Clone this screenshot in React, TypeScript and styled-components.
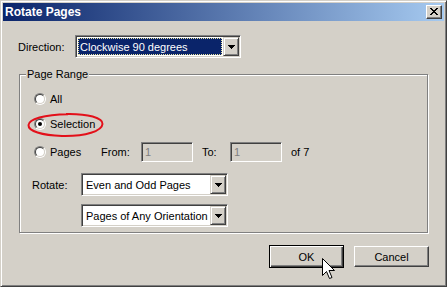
import React from "react";
import styled, { createGlobalStyle } from "styled-components";

const Global = createGlobalStyle`
  html, body { margin: 0; padding: 0; background: #d4d0c8; }
  body { font-family: "Liberation Sans", Tahoma, Arial, sans-serif; font-size: 11px; color: #000; }
  * { box-sizing: border-box; }
`;

const Window = styled.div`
  width: 447px;
  height: 287px;
  background: #d4d0c8;
  border: 1px solid;
  border-color: #d4d0c8 #404040 #404040 #d4d0c8;
  box-shadow: inset 1px 1px 0 #fff, inset -1px -1px 0 #808080;
  padding: 2px;
  display: flex;
  flex-direction: column;
`;

const TitleBar = styled.div`
  height: 18px;
  flex: none;
  display: flex;
  align-items: center;
  justify-content: space-between;
  padding: 0 2px 0 2px;
  background: linear-gradient(to right, #0a246a, #a6caf0);
`;

const Title = styled.span`
  color: #fff;
  font-weight: bold;
  font-size: 12px;
  letter-spacing: 0;
`;

const CloseButton = styled.div`
  width: 16px;
  height: 14px;
  background: #d4d0c8;
  border: 1px solid;
  border-color: #fff #404040 #404040 #fff;
  box-shadow: inset -1px -1px 0 #808080;
  display: flex;
  align-items: center;
  justify-content: center;
  padding: 0 1px 1px 0;
`;

const Content = styled.div`
  flex: 1;
  display: flex;
  flex-direction: column;
  padding: 14px 15px 0 15px;
`;

const Row = styled.div<{ $top?: number; $indent?: number }>`
  display: flex;
  align-items: center;
  margin-top: ${(p) => p.$top ?? 0}px;
  padding-left: ${(p) => p.$indent ?? 0}px;
  position: relative;
`;

const Label = styled.span<{ $w?: number }>`
  width: ${(p) => (p.$w ? `${p.$w}px` : "auto")};
  flex: none;
  white-space: nowrap;
`;

const Combo = styled.div<{ $w: number; $h: number }>`
  width: ${(p) => p.$w}px;
  height: ${(p) => p.$h}px;
  flex: none;
  display: flex;
  background: #fff;
  border: 1px solid;
  border-color: #808080 #fff #fff #808080;
  box-shadow: inset 1px 1px 0 #404040, inset -1px -1px 0 #d4d0c8;
  padding: 1px;
`;

const ComboValue = styled.div<{ $selected?: boolean }>`
  flex: 1;
  margin: 1px;
  padding-left: 2px;
  display: flex;
  align-items: center;
  white-space: nowrap;
  overflow: hidden;
  background: ${(p) => (p.$selected ? "#0a246a" : "transparent")};
  color: ${(p) => (p.$selected ? "#fff" : "#000")};
  outline: ${(p) => (p.$selected ? "1px dotted #e8e4a0" : "none")};
  outline-offset: -1px;
`;

const DropButton = styled.div`
  width: 16px;
  flex: none;
  background: #d4d0c8;
  border: 1px solid;
  border-color: #d4d0c8 #404040 #404040 #d4d0c8;
  box-shadow: inset 1px 1px 0 #fff, inset -1px -1px 0 #808080;
  display: flex;
  align-items: center;
  justify-content: center;
`;

const Group = styled.div`
  position: relative;
  margin: 16px 0 0 1px;
  width: 409px;
  border: 1px solid #808080;
  box-shadow: inset 1px 1px 0 #fff, 1px 1px 0 #fff;
  padding: 0 0 5px 12px;
  display: flex;
  flex-direction: column;
`;

const Legend = styled.span`
  position: absolute;
  top: -7px;
  left: 6px;
  padding: 0 1px;
  background: #d4d0c8;
  line-height: 13px;
`;

const RadioOption = styled.label<{ $w?: number }>`
  display: flex;
  align-items: center;
  gap: 4px;
  height: 16px;
  width: ${(p) => (p.$w ? `${p.$w}px` : "auto")};
  flex: none;
`;

const RadioCircle = styled.span<{ $checked?: boolean }>`
  width: 12px;
  height: 12px;
  flex: none;
  border-radius: 50%;
  border: 1px solid;
  border-color: #808080 #fff #fff #808080;
  display: flex;
  align-items: center;
  justify-content: center;
  &::before {
    content: "";
    width: 10px;
    height: 10px;
    border-radius: 50%;
    box-sizing: border-box;
    border: 1px solid;
    border-color: #404040 #d4d0c8 #d4d0c8 #404040;
    background: #fff;
  }
  &::after {
    content: "";
    position: absolute;
    width: 4px;
    height: 4px;
    border-radius: 50%;
    background: ${(p) => (p.$checked ? "#000" : "transparent")};
  }
`;

const TextBox = styled.div`
  width: 52px;
  height: 20px;
  flex: none;
  background: #d4d0c8;
  color: #808080;
  border: 1px solid;
  border-color: #808080 #fff #fff #808080;
  box-shadow: inset 1px 1px 0 #404040, inset -1px -1px 0 #d4d0c8;
  padding: 2px 3px;
  line-height: 14px;
`;

const Annotation = styled.svg`
  position: absolute;
  left: -6px;
  top: -4px;
  pointer-events: none;
`;

const ButtonRow = styled.div`
  display: flex;
  justify-content: flex-end;
  align-items: center;
  gap: 10px;
  margin-top: 12px;
`;

const Button = styled.div<{ $default?: boolean }>`
  position: relative;
  width: 75px;
  height: ${(p) => (p.$default ? 23 : 21)}px;
  background: #d4d0c8;
  display: flex;
  align-items: center;
  justify-content: center;
  border: 1px solid;
  border-color: ${(p) => (p.$default ? "#000" : "#fff #404040 #404040 #fff")};
  box-shadow: ${(p) =>
    p.$default
      ? "inset 1px 1px 0 #fff, inset -1px -1px 0 #404040, inset -2px -2px 0 #808080"
      : "inset -1px -1px 0 #808080"};
`;

const Cursor = styled.svg`
  position: absolute;
  left: 52px;
  top: 12px;
  pointer-events: none;
`;

const Arrow = () => (
  <svg width="7" height="4" viewBox="0 0 7 4" shapeRendering="crispEdges">
    <path d="M0 0h7v1H0zM1 1h5v1H1zM2 2h3v1H2zM3 3h1v1H3z" fill="#000" />
  </svg>
);

const CloseGlyph = () => (
  <svg width="8" height="7" viewBox="0 0 8 7" shapeRendering="crispEdges">
    <path
      d="M0 0h2v1H0zM6 0h2v1H6zM1 1h2v1H1zM5 1h2v1H5zM2 2h4v1H2zM3 3h2v1H3zM2 4h4v1H2zM1 5h2v1H1zM5 5h2v1H5zM0 6h2v1H0zM6 6h2v1H6z"
      fill="#000"
    />
  </svg>
);

export default function App() {
  return (
    <>
      <Global />
      <Window>
        <TitleBar>
          <Title>Rotate Pages</Title>
          <CloseButton>
            <CloseGlyph />
          </CloseButton>
        </TitleBar>
        <Content>
          <Row>
            <Label $w={57}>Direction:</Label>
            <Combo $w={166} $h={23}>
              <ComboValue $selected>Clockwise 90 degrees</ComboValue>
              <DropButton>
                <Arrow />
              </DropButton>
            </Combo>
          </Row>
          <Group>
            <Legend>Page Range</Legend>
            <Row $top={16} $indent={2}>
              <RadioOption>
                <RadioCircle />
                All
              </RadioOption>
            </Row>
            <Row $top={9} $indent={2}>
              <RadioOption>
                <RadioCircle $checked />
                Selection
              </RadioOption>
              <Annotation width="80" height="26" viewBox="0 0 80 26">
                <path
                  d="M40 2 C62 1.5 77 6 76.5 12 C76 19 60 24.5 36 24 C16 23.5 2 19 2.5 13 C3 7 18 2.5 42 2.2"
                  fill="none"
                  stroke="#e3101a"
                  strokeWidth="2"
                />
              </Annotation>
            </Row>
            <Row $top={10} $indent={2}>
              <RadioOption $w={67}>
                <RadioCircle />
                Pages
              </RadioOption>
              <Label $w={40}>From:</Label>
              <TextBox>1</TextBox>
              <Label $w={28} style={{ marginLeft: 9 }}>To:</Label>
              <TextBox>1</TextBox>
              <Label style={{ marginLeft: 9 }}>of 7</Label>
            </Row>
            <Row $top={11}>
              <Label $w={49}>Rotate:</Label>
              <Combo $w={147} $h={23}>
                <ComboValue>Even and Odd Pages</ComboValue>
                <DropButton>
                  <Arrow />
                </DropButton>
              </Combo>
            </Row>
            <Row $top={8} $indent={49}>
              <Combo $w={147} $h={23}>
                <ComboValue>Pages of Any Orientation</ComboValue>
                <DropButton>
                  <Arrow />
                </DropButton>
              </Combo>
            </Row>
          </Group>
          <ButtonRow>
            <Button $default>
              OK
              <Cursor width="14" height="22" viewBox="0 0 14 22">
                <path
                  d="M0.5 0.5 L0.5 17.5 L4.5 13.5 L7.5 20.5 L10 19.5 L7 12.5 L12.5 12.5 Z"
                  fill="#fff"
                  stroke="#000"
                  strokeWidth="1"
                />
              </Cursor>
            </Button>
            <Button>Cancel</Button>
          </ButtonRow>
        </Content>
      </Window>
    </>
  );
}
